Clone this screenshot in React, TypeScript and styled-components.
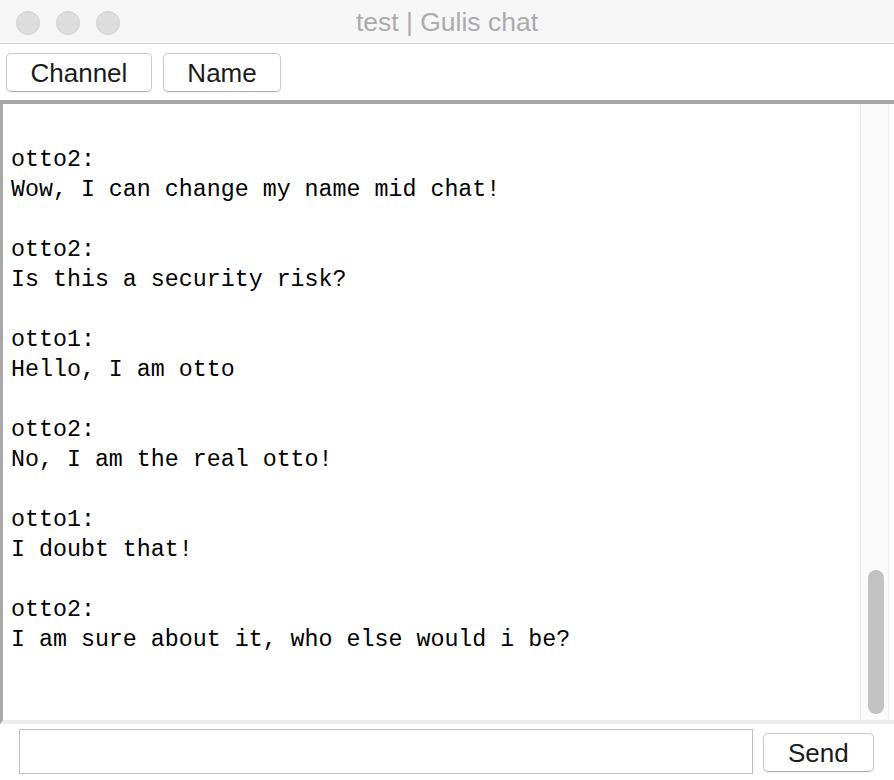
import React from "react";
import styled, { createGlobalStyle } from "styled-components";

const GlobalStyle = createGlobalStyle`
  html, body { margin: 0; padding: 0; background: #ffffff; }
  body { font-family: "Liberation Sans", Arial, sans-serif; }
  * { box-sizing: border-box; }
`;

const Window = styled.div`
  width: 894px;
  height: 780px;
  display: flex;
  flex-direction: column;
  background: #ffffff;
  overflow: hidden;
`;

const TitleBar = styled.div`
  height: 44px;
  flex: none;
  display: grid;
  grid-template-columns: 1fr auto 1fr;
  align-items: center;
  padding-top: 2px;
  background: #f6f6f6;
  border-bottom: 1px solid #d2d2d2;
`;

const Lights = styled.div`
  display: flex;
  gap: 16px;
  padding-left: 16px;
`;

const Light = styled.span`
  width: 24px;
  height: 24px;
  border-radius: 50%;
  background: #dddddd;
  border: 1px solid #d1d1d1;
`;

const Title = styled.div`
  font-family: "Liberation Sans", Arial, sans-serif;
  font-size: 26.5px;
  color: #ababab;
  line-height: 1;
`;

const Toolbar = styled.div`
  height: 56px;
  flex: none;
  display: flex;
  align-items: flex-start;
  gap: 11px;
  padding: 9px 0 0 6px;
`;

const Button = styled.button`
  height: 39px;
  padding: 0 23.5px;
  background: #ffffff;
  border: 1px solid #cacaca;
  border-bottom-color: #b4b4b4;
  border-radius: 5px;
  box-shadow: 0 1px 1px rgba(0, 0, 0, 0.06);
  font-family: "Liberation Sans", Arial, sans-serif;
  font-size: 26px;
  color: #1b1b1b;
  line-height: 1;
  cursor: pointer;
`;

const ChatFrame = styled.div`
  height: 624px;
  flex: none;
  display: flex;
  border-top: 4px solid #a8a8a8;
  border-left: 3px solid #a8a8a8;
  border-bottom: 4px solid #ebebeb;
`;

const Messages = styled.div`
  flex: 1;
  padding: 41px 0 0 8px;
  font-family: "Liberation Mono", "Courier New", monospace;
  font-size: 23.3px;
  line-height: 30px;
  color: #000000;
  overflow: hidden;
`;

const Message = styled.div`
  margin-bottom: 30px;
  white-space: pre;
`;

const Track = styled.div`
  width: 29px;
  margin-right: 5px;
  flex: none;
  display: flex;
  flex-direction: column;
  background: #fafafa;
  border-left: 1px solid #e7e7e7;
  border-right: 1px solid #ececec;
`;

const Thumb = styled.div`
  margin: auto 0 6px 7px;
  width: 16px;
  height: 144px;
  border-radius: 8px;
  background: #c2c2c2;
`;

const InputBar = styled.div`
  height: 56px;
  flex: none;
  display: flex;
  align-items: flex-start;
  gap: 10px;
  padding: 5px 0 0 19px;
`;

const TextInput = styled.input`
  width: 734px;
  height: 45px;
  border: 1px solid #bfbfbf;
  border-radius: 0;
  outline: none;
  padding: 0 6px;
  font-family: "Liberation Sans", Arial, sans-serif;
  font-size: 22px;
`;

const SendButton = styled(Button)`
  margin-top: 4px;
  padding: 0 24px;
`;

const messages: { name: string; text: string }[] = [
  { name: "otto2", text: "Wow, I can change my name mid chat!" },
  { name: "otto2", text: "Is this a security risk?" },
  { name: "otto1", text: "Hello, I am otto" },
  { name: "otto2", text: "No, I am the real otto!" },
  { name: "otto1", text: "I doubt that!" },
  { name: "otto2", text: "I am sure about it, who else would i be?" },
];

export default function App() {
  return (
    <>
      <GlobalStyle />
      <Window>
        <TitleBar>
          <Lights>
            <Light />
            <Light />
            <Light />
          </Lights>
          <Title>test | Gulis chat</Title>
          <div />
        </TitleBar>
        <Toolbar>
          <Button>Channel</Button>
          <Button>Name</Button>
        </Toolbar>
        <ChatFrame>
          <Messages>
            {messages.map((m, i) => (
              <Message key={i}>
                {m.name}:{"\n"}
                {m.text}
              </Message>
            ))}
          </Messages>
          <Track>
            <Thumb />
          </Track>
        </ChatFrame>
        <InputBar>
          <TextInput type="text" />
          <SendButton>Send</SendButton>
        </InputBar>
      </Window>
    </>
  );
}
